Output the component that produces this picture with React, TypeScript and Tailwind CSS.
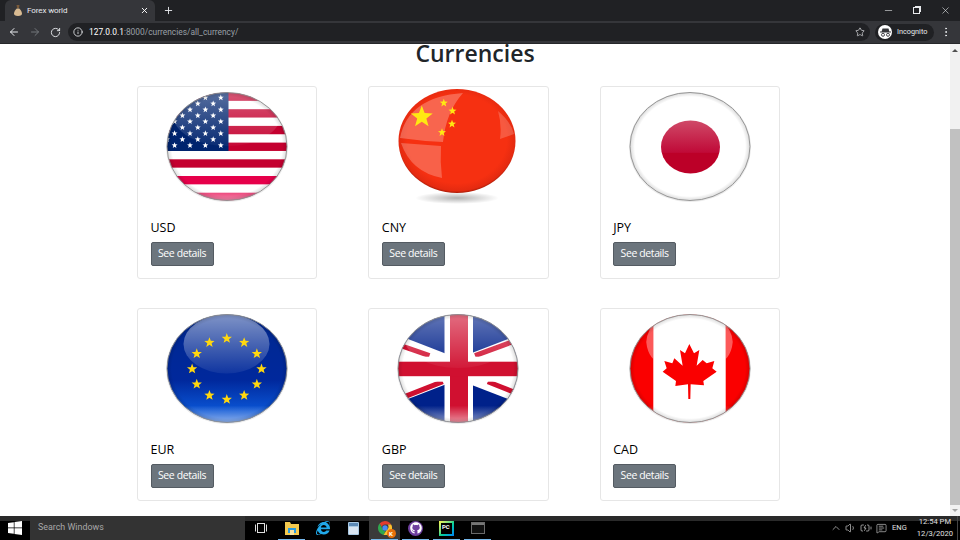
import { useId } from "react";
import { ArrowLeft, ArrowRight, RotateCw, Info, Star, X, Plus, Minus, EllipsisVertical, ChevronUp, Volume1, MessageSquareText, BatteryCharging } from "lucide-react";
import { FaGithub, FaInternetExplorer } from "react-icons/fa";

const FONT = "font-['Open_Sans','Noto_Sans',sans-serif]";
const UI_FONT = "font-['Roboto','Open_Sans',sans-serif]";

function starPoints(cx: number, cy: number, r: number) {
  const pts: string[] = [];
  for (let i = 0; i < 10; i++) {
    const rad = i % 2 === 0 ? r : r * 0.42;
    const a = -Math.PI / 2 + (i * Math.PI) / 5;
    pts.push(`${(cx + rad * Math.cos(a)).toFixed(2)},${(cy + rad * Math.sin(a)).toFixed(2)}`);
  }
  return pts.join(" ");
}

// shared sphere: clips the flag, then puts the glass highlights on top
function Globe({ children, dome = 0.5 }: { children: React.ReactNode; dome?: number }) {
  const id = useId().replace(/:/g, "");
  return (
    <svg width="124" height="120" viewBox="0 0 124 120" className="block mx-auto">
      <defs>
        <clipPath id={`c${id}`}>
          <ellipse cx="62" cy="59.5" rx="60" ry="54" />
        </clipPath>
        <linearGradient id={`d${id}`} x1="0" y1="0" x2="0" y2="1">
          <stop offset="0" stopColor="#fff" stopOpacity="0.8" />
          <stop offset="1" stopColor="#fff" stopOpacity="0.08" />
        </linearGradient>
        <linearGradient id={`b${id}`} x1="0" y1="0" x2="0" y2="1">
          <stop offset="0.84" stopColor="#fff" stopOpacity="0" />
          <stop offset="1" stopColor="#fff" stopOpacity="0.55" />
        </linearGradient>
        <radialGradient id={`e${id}`} cx="0.5" cy="0.5" r="0.5">
          <stop offset="0.92" stopColor="#000" stopOpacity="0" />
          <stop offset="1" stopColor="#000" stopOpacity="0.14" />
        </radialGradient>
      </defs>
      <ellipse cx="62" cy="60" rx="61" ry="55" fill="#000" opacity="0.08" />
      <g clipPath={`url(#c${id})`}>
        {children}
        <ellipse cx="62" cy="28" rx="54" ry="31" fill={`url(#d${id})`} opacity={dome} />
        <rect x="0" y="5" width="124" height="109" fill={`url(#b${id})`} />
        <ellipse cx="62" cy="59.5" rx="60" ry="54" fill={`url(#e${id})`} />
      </g>
      <ellipse cx="62" cy="59.5" rx="60" ry="54" fill="none" stroke="#8c8c8c" strokeWidth="0.9" />
    </svg>
  );
}

function UsdFlag() {
  const stars: [number, number][] = [];
  for (let r = 0; r < 9; r++) {
    const even = r % 2 === 0;
    for (let c = 0; c < (even ? 5 : 4); c++) {
      stars.push([(even ? -5.8 : 2) + c * 15.4, 10.7 + r * 5.96]);
    }
  }
  return (
    <Globe dome={0.48}>
      <rect x="0" y="5" width="124" height="110" fill="#fff" />
      {[0, 2, 4, 6, 8, 10, 12].map((i) => (
        <rect key={i} x="0" y={5.5 + i * 8.35} width="124" height="8.35" fill={i > 8 ? "#e6004a" : "#c4002f"} />
      ))}
      <rect x="0" y="5" width="63.5" height="59" fill="#00246e" />
      {stars.map(([x, y], i) => (
        <polygon key={i} points={starPoints(x, y, 3.1)} fill="#fff" />
      ))}
    </Globe>
  );
}

function CnyFlag() {
  const id = useId().replace(/:/g, "");
  return (
    <svg width="124" height="120" viewBox="0 0 124 120" className="block mx-auto">
      <defs>
        <radialGradient id={`s${id}`}>
          <stop offset="0" stopColor="#000" stopOpacity="0.3" />
          <stop offset="1" stopColor="#000" stopOpacity="0" />
        </radialGradient>
        <radialGradient id={`r${id}`} cx="0.5" cy="0.48" r="0.52">
          <stop offset="0.82" stopColor="#f63011" />
          <stop offset="0.96" stopColor="#e42a10" />
          <stop offset="1" stopColor="#a81c08" />
        </radialGradient>
      </defs>
      <ellipse cx="61" cy="111" rx="42" ry="6" fill={`url(#s${id})`} />
      <ellipse cx="61" cy="54" rx="58.5" ry="52" fill={`url(#r${id})`} />
      <path d="M4 51Q12 10 67 6Q50 25 47 55Q25 54 4 51Z" fill="#fff" opacity="0.26" />
      <path d="M5 56L45 59Q44 75 46 91Q15 85 5 56Z" fill="#fff" opacity="0.24" />
      <path d="M102 24Q115 35 118 47L104 52Q106 38 102 24Z" fill="#fff" opacity="0.2" />
      <polygon points={starPoints(25.8, 30, 11.5)} fill="#ffe812" />
      <polygon points={starPoints(47.8, 16, 4.2)} fill="#ffe812" />
      <polygon points={starPoints(56.5, 24, 4.2)} fill="#ffe812" />
      <polygon points={starPoints(56, 37, 4.2)} fill="#ffe812" />
      <polygon points={starPoints(46, 45.5, 4.2)} fill="#ffe812" />
    </svg>
  );
}

function JpyFlag() {
  const id = useId().replace(/:/g, "");
  return (
    <Globe dome={0}>
      <defs>
        <linearGradient id={`j${id}`} x1="0" y1="0" x2="0" y2="1">
          <stop offset="0" stopColor="#cf4a68" />
          <stop offset="0.6" stopColor="#c00a38" />
          <stop offset="0.62" stopColor="#bc0028" />
          <stop offset="1" stopColor="#bc0028" />
        </linearGradient>
      </defs>
      <rect x="0" y="0" width="124" height="120" fill="#fff" />
      <ellipse cx="62.5" cy="60" rx="29.5" ry="26.5" fill={`url(#j${id})`} />
    </Globe>
  );
}

function EurFlag() {
  const id = useId().replace(/:/g, "");
  return (
    <Globe dome={0}>
      <defs>
        <linearGradient id={`u${id}`} x1="0" y1="0" x2="0" y2="1">
          <stop offset="0" stopColor="#fff" stopOpacity="0.5" />
          <stop offset="1" stopColor="#fff" stopOpacity="0.06" />
        </linearGradient>
        <linearGradient id={`v${id}`} x1="0" y1="0" x2="0" y2="1">
          <stop offset="0" stopColor="#00288f" />
          <stop offset="0.6" stopColor="#00289c" />
          <stop offset="0.88" stopColor="#0a55d5" />
          <stop offset="1" stopColor="#0a55d5" />
        </linearGradient>
      </defs>
      <rect x="0" y="5" width="124" height="110" fill={`url(#v${id})`} />
      <ellipse cx="61.5" cy="35" rx="43" ry="29.5" fill={`url(#u${id})`} />
      {Array.from({ length: 12 }).map((_, i) => {
        const a = (i * Math.PI) / 6;
        return (
          <polygon
            key={i}
            points={starPoints(61.8 + 34.7 * Math.sin(a), 60 - 30.5 * Math.cos(a), 5.4)}
            fill="#ffd70f"
          />
        );
      })}
    </Globe>
  );
}

function GbpFlag() {
  return (
    <Globe dome={0.55}>
      <rect x="0" y="0" width="124" height="120" fill="#00218a" />
      <line x1="0" y1="36" x2="124" y2="84" stroke="#fff" strokeWidth="20" />
      <line x1="0" y1="84" x2="124" y2="36" stroke="#fff" strokeWidth="20" />
      <line x1="0" y1="35" x2="33.5" y2="46.7" stroke="#d01030" strokeWidth="5" />
      <line x1="124" y1="30" x2="79" y2="46.7" stroke="#d01030" strokeWidth="5" />
      <line x1="0" y1="91" x2="46.8" y2="72.7" stroke="#d01030" strokeWidth="5" />
      <line x1="124" y1="85.5" x2="91.8" y2="72.7" stroke="#d01030" strokeWidth="5" />
      <rect x="48.5" y="0" width="28.5" height="120" fill="#fff" />
      <rect x="0" y="47.7" width="124" height="25" fill="#fff" />
      <rect x="54" y="0" width="18" height="120" fill="#d01030" />
      <rect x="0" y="52.7" width="124" height="14.5" fill="#d01030" />
    </Globe>
  );
}

function CadFlag() {
  return (
    <Globe dome={0}>
      <rect x="0" y="0" width="124" height="120" fill="#fa0000" />
      <rect x="25.3" y="0" width="72.4" height="120" fill="#fff" />
      <path d="M25.3 15Q16 28 19 38Q21 46 25.3 50Z" fill="#fff" opacity="0.35" />
      <path d="M97.7 15Q107 28 104 38Q102 46 97.7 50Z" fill="#fff" opacity="0.35" />
      <g transform="translate(-13 -4) scale(0.3333)">
        <polygon
          points="223,117 237,145 253,135 245,182 263,165 275,175 298,168 292,190 305,200 265,228 267,241 227,238 226,282 220,282 219,238 181,243 183,228 143,200 155,190 148,168 172,175 178,160 203,182 195,135 210,145"
          fill="#fa0000"
        />
      </g>
    </Globe>
  );
}

const currencies = [
  { code: "USD", flag: <UsdFlag /> },
  { code: "CNY", flag: <CnyFlag /> },
  { code: "JPY", flag: <JpyFlag /> },
  { code: "EUR", flag: <EurFlag /> },
  { code: "GBP", flag: <GbpFlag /> },
  { code: "CAD", flag: <CadFlag /> },
];

function CurrencyCard({ code, flag }: { code: string; flag: React.ReactNode }) {
  return (
    <div className="h-[193px] rounded-[3px] border border-[#e6e6e6] bg-white">
      {flag}
      <div className="px-[12.5px]">
        <div className="mt-[12px] text-[12.5px] leading-[18px] text-black">{code}</div>
        <button className="mt-[5px] h-[24px] w-[63px] rounded-[2px] border border-[#545b62] bg-[#6c757d] text-[10.5px] tracking-[-0.4px] text-white">
          See details
        </button>
      </div>
    </div>
  );
}

function MoneyBag() {
  return (
    <svg width="8" height="11" viewBox="0 0 8 11">
      <path d="M2.5 0h3L5 3H3z" fill="#7a5a3a" />
      <path d="M2.8 3.4h2.4C7 5 8 7 8 8.5 8 10 7 11 4 11S0 10 0 8.5C0 7 1 5 2.8 3.4z" fill="#d9bb92" />
    </svg>
  );
}

function IncognitoIcon() {
  return (
    <div className="flex h-[14px] w-[14px] items-center justify-center rounded-full bg-white">
      <svg width="11" height="9" viewBox="0 0 11 9">
        <path d="M2.5.5h6l.9 3H1.6zM0 3.6h11v.9H0z" fill="#35363a" />
        <circle cx="3" cy="6.8" r="1.5" fill="none" stroke="#35363a" strokeWidth="0.9" />
        <circle cx="8" cy="6.8" r="1.5" fill="none" stroke="#35363a" strokeWidth="0.9" />
      </svg>
    </div>
  );
}

function BrowserChrome() {
  return (
    <header className={`shrink-0 bg-[#202124] text-white ${UI_FONT}`}>
      <div className="flex h-[21px] items-stretch pl-[5px]">
        <div className="flex w-[150px] items-center rounded-t-[6px] bg-[#35363a] pl-[9px] pr-[6px]">
          <MoneyBag />
          <span className="ml-[5px] flex-1 text-[8px] tracking-[-0.1px] text-[#e8eaed]">Forex world</span>
          <X size={9} strokeWidth={2.5} />
        </div>
        <div className="ml-[8px] flex items-center">
          <Plus size={11} strokeWidth={2} className="text-[#e8eaed]" />
        </div>
        <div className="ml-auto flex items-center text-[#e8eaed]">
          <div className="flex w-[28px] justify-center">
            <Minus size={11} strokeWidth={1.3} />
          </div>
          <div className="flex w-[29px] justify-center">
            <div className="relative h-[7px] w-[7px] border border-[#e8eaed]">
              <div className="absolute -right-[2px] -top-[2px] h-[6px] w-[6px] border-r border-t border-[#e8eaed]" />
            </div>
          </div>
          <div className="flex w-[29px] justify-center">
            <X size={11} strokeWidth={1.3} />
          </div>
        </div>
      </div>
      <div className="flex h-[23px] items-center border-b border-[#26272a] bg-[#35363a]">
        <div className="flex w-[68px] items-center gap-[9px] pl-[8px]">
          <ArrowLeft size={12} strokeWidth={2} className="text-[#e8eaed]" />
          <ArrowRight size={12} strokeWidth={2} className="text-[#73767a]" />
          <RotateCw size={11} strokeWidth={2} className="text-[#e8eaed]" />
        </div>
        <div className="flex h-[18px] w-[802px] items-center rounded-full bg-[#202124] pl-[5px] pr-[5px]">
          <Info size={10} strokeWidth={2} className="text-[#e8eaed]" />
          <span className="ml-[6px] text-[8.4px] text-white">
            127.0.0.1<span className="text-[#9aa0a6]">:8000/currencies/all_currency/</span>
          </span>
          <Star size={10} strokeWidth={1.6} className="ml-auto text-[#e8eaed]" />
        </div>
        <div className="ml-[5px] flex h-[17px] w-[59px] items-center gap-[5px] rounded-full bg-[#202124] pl-[3px]">
          <IncognitoIcon />
          <span className="text-[7.3px] text-[#e8eaed]">Incognito</span>
        </div>
        <EllipsisVertical size={12} className="ml-[6px] text-[#e8eaed]" />
      </div>
    </header>
  );
}

function Scrollbar() {
  return (
    <div className="flex w-[10px] shrink-0 flex-col bg-[#f1f1f1]">
      <div className="flex h-[13px] items-center justify-center">
        <div className="h-0 w-0 border-x-[3px] border-b-[3px] border-x-transparent border-b-[#505050]" />
      </div>
      <div className="mt-[72px] h-[376px] bg-[#c1c1c1]" />
      <div className="mt-auto flex h-[11px] items-center justify-center">
        <div className="h-0 w-0 border-x-[3px] border-t-[3px] border-x-transparent border-t-[#a3a3a3]" />
      </div>
    </div>
  );
}

function TaskIcon({ children, active, current }: { children?: React.ReactNode; active?: boolean; current?: boolean }) {
  return (
    <div className={`relative flex h-full w-[31px] items-center justify-center ${current ? "bg-[#3a3a3a]" : ""}`}>
      {children}
      {active && <div className="absolute bottom-0 left-[2px] right-[2px] h-[1px] bg-[#76b9ed]" />}
    </div>
  );
}

function Taskbar() {
  return (
    <footer className={`relative flex h-[24px] shrink-0 items-stretch bg-black text-white ${UI_FONT}`}>
      <div className="absolute inset-x-0 top-0 h-[5px] bg-[#2a2a2a]" />
      <div className="relative flex w-[30px] items-center justify-center">
        <svg width="14" height="14" viewBox="0 0 14 14" fill="#fff">
          <path d="M0 2l5.8-.8v5.4H0zM6.5 1.1L14 0v6.6H6.5zM0 7.3h5.8v5.5L0 12zM6.5 7.3H14V14l-7.5-1.1z" />
        </svg>
      </div>
      <div className="relative flex w-[215px] items-center bg-[#333] pl-[8px] text-[8.9px] text-[#a8a8a8]">
        Search Windows
      </div>
      <div className="relative flex items-stretch">
        <TaskIcon>
          <svg width="12" height="10" viewBox="0 0 12 10" fill="none" stroke="#ddd">
            <rect x="2.5" y=".5" width="7" height="9" />
            <path d="M.5 1.5v7M11.5 1.5v7" />
          </svg>
        </TaskIcon>
        <TaskIcon active>
          <svg width="14" height="13" viewBox="0 0 14 13">
            <path d="M0 0h5l1 2h8v11H0z" fill="#f4c94e" />
            <rect x="3" y="6" width="8" height="5" fill="#2a9be0" />
            <rect x="5" y="8" width="4" height="5" fill="#f4e3a5" />
          </svg>
        </TaskIcon>
        <TaskIcon>
          <FaInternetExplorer size={14} className="text-[#21a9ea]" />
        </TaskIcon>
        <TaskIcon>
          <div className="flex h-[13px] w-[11px] flex-col gap-[1px] rounded-[1px] bg-[#a9c9e3] p-[1px]">
            <div className="h-[3px] bg-[#5b89b5]" />
            <div className="flex-1 bg-[#d9e6f2]" />
          </div>
        </TaskIcon>
        <TaskIcon active current>
          <div className="relative">
            <svg width="14" height="14" viewBox="0 0 14 14">
              <path d="M7 0a7 7 0 0 1 6.1 3.5H7a3.5 3.5 0 0 0-3.3 2.4L1.6 2.6A7 7 0 0 1 7 0z" fill="#e33b2e" />
              <path d="M1.6 2.6L4.6 7.9a3.5 3.5 0 0 0 3 2.5l-2 3.5A7 7 0 0 1 1.6 2.6z" fill="#2fa84f" />
              <path d="M13.1 3.5A7 7 0 0 1 5.6 13.9L8.6 9A3.5 3.5 0 0 0 9.6 3.5z" fill="#fbc02d" />
              <circle cx="7" cy="7" r="2.7" fill="#4a8af4" />
            </svg>
            <div className="absolute bottom-[-3px] right-[-4px] flex h-[9px] w-[9px] items-center justify-center rounded-full bg-[#e8710a] text-[6px] font-bold text-white">
              K
            </div>
          </div>
        </TaskIcon>
        <TaskIcon active>
          <div className="flex h-[15px] w-[15px] items-center justify-center rounded-full bg-[#6e3f9e]">
            <FaGithub size={12} className="text-white" />
          </div>
        </TaskIcon>
        <TaskIcon active>
          <div className="flex h-[15px] w-[15px] items-center justify-center bg-gradient-to-br from-[#fcf84a] via-[#21d789] to-[#087cfa] p-[2px]">
            <div className="flex h-full w-full items-start justify-start bg-black pl-[1px] text-[6px] font-bold leading-[7px] text-white">
              PC
            </div>
          </div>
        </TaskIcon>
        <TaskIcon active>
          <div className="h-[12px] w-[14px] border border-[#6a6a6a] bg-[#111]">
            <div className="h-[2px] bg-[#777]" />
          </div>
        </TaskIcon>
      </div>
      <div className="relative ml-auto flex items-center pr-[2px] text-[#e0e0e0]">
        <ChevronUp size={12} strokeWidth={1.3} />
        <Volume1 size={12} strokeWidth={1.3} className="ml-[3px]" />
        <BatteryCharging size={12} strokeWidth={1.3} className="ml-[3px]" />
        <MessageSquareText size={11} strokeWidth={1.3} className="ml-[4px]" />
        <span className="ml-[5px] text-[7.5px]">ENG</span>
        <div className="ml-[10px] flex flex-col items-center text-[7.6px] leading-[12px]">
          <span>12:54 PM</span>
          <span>12/3/2020</span>
        </div>
        <div className="ml-[4px] h-full w-[1px] bg-[#444]" />
      </div>
    </footer>
  );
}

export default function App() {
  return (
    <div className={`flex h-[540px] w-[960px] flex-col overflow-hidden bg-white ${FONT}`}>
      <BrowserChrome />
      <div className="flex min-h-0 flex-1">
        <main className="min-w-0 flex-1">
          <h1 className="h-[42px] w-[950px] text-center text-[23px] font-semibold leading-[18px] text-[#212529]">
            Currencies
          </h1>
          <div className="ml-[137px] grid w-[643px] grid-cols-3 gap-x-[51px] gap-y-[29px]">
            {currencies.map((c) => (
              <CurrencyCard key={c.code} code={c.code} flag={c.flag} />
            ))}
          </div>
        </main>
        <Scrollbar />
      </div>
      <Taskbar />
    </div>
  );
}
